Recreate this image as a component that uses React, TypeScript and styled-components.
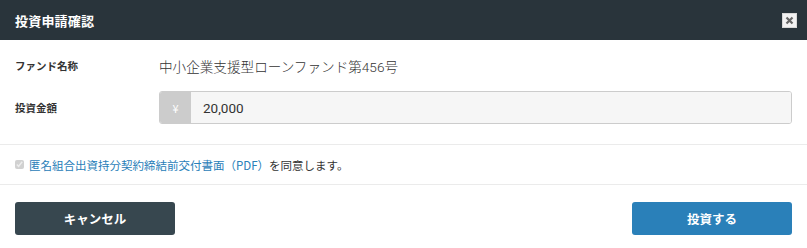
import React from "react";
import styled, { createGlobalStyle } from "styled-components";

const GlobalStyle = createGlobalStyle`
  html, body {
    margin: 0;
    padding: 0;
    background: #ffffff;
  }
  body {
    font-family: "Noto Sans CJK JP", "Noto Sans", sans-serif;
    color: #333333;
  }
`;

const Modal = styled.div`
  width: 807px;
  height: 248px;
  display: flex;
  flex-direction: column;
  background: #ffffff;
`;

const Header = styled.div`
  height: 40px;
  background: #29343b;
  display: flex;
  align-items: center;
  justify-content: space-between;
  padding: 0 10px 0 15px;
  box-sizing: border-box;
`;

const Title = styled.h1`
  margin: 0;
  font-size: 13px;
  font-weight: 700;
  color: #ffffff;
  letter-spacing: 0.2px;
`;

const CloseButton = styled.button`
  width: 15px;
  height: 15px;
  padding: 0;
  border: 1px solid #d8d8d8;
  background: #f2f2f2;
  display: flex;
  align-items: center;
  justify-content: center;
  cursor: pointer;
  margin-top: 1px;
`;

const Body = styled.div`
  padding: 9px 15px 20px;
  display: flex;
  flex-direction: column;
  gap: 9px;
`;

const Row = styled.div`
  display: flex;
  align-items: center;
  min-height: 33px;
`;

const Label = styled.div`
  width: 144px;
  font-size: 10.5px;
  font-weight: 700;
  color: #333333;
`;

const Value = styled.div`
  font-family: Roboto, "Noto Sans CJK JP", sans-serif;
  font-size: 13.6px;
  font-weight: 300;
  color: #333333;
`;

const InputGroup = styled.div`
  flex: 1;
  display: flex;
  height: 33px;
  border: 1px solid #cccccc;
  border-radius: 3px;
  overflow: hidden;
  box-sizing: border-box;
`;

const Addon = styled.div`
  width: 31px;
  background: #cccccc;
  color: #ffffff;
  font-size: 11px;
  display: flex;
  align-items: center;
  justify-content: center;
`;

const AmountInput = styled.input`
  flex: 1;
  border: none;
  outline: none;
  background: #f6f6f6;
  padding: 0 12px;
  font-family: Roboto, "Noto Sans CJK JP", sans-serif;
  font-size: 13.5px;
  color: #333333;
`;

const Agreement = styled.div`
  border-top: 1px solid #ebebeb;
  border-bottom: 1px solid #ebebeb;
  height: 41px;
  box-sizing: border-box;
  display: flex;
  align-items: center;
  padding: 0 15px;
  gap: 5px;
  font-size: 11.5px;
`;

const Check = styled.input`
  margin: 0;
  width: 9px;
  height: 9px;
`;

const DocLink = styled.a`
  color: #2980b9;
  text-decoration: none;
`;

const Footer = styled.div`
  flex: 1;
  display: flex;
  align-items: flex-start;
  justify-content: space-between;
  padding: 17px 15px 0;
`;

const Button = styled.button<{ primary?: boolean }>`
  width: 160px;
  height: 33px;
  border: none;
  border-radius: 3px;
  background: ${(p) => (p.primary ? "#2a80b9" : "#37474f")};
  color: #ffffff;
  font-family: inherit;
  font-size: 12.5px;
  font-weight: 700;
  cursor: pointer;
`;

const App: React.FC = () => {
  return (
    <>
      <GlobalStyle />
      <Modal>
        <Header>
          <Title>投資申請確認</Title>
          <CloseButton aria-label="閉じる">
            <svg width="9" height="9" viewBox="0 0 9 9">
              <path
                d="M1.5 1.5 L7.5 7.5 M7.5 1.5 L1.5 7.5"
                stroke="#666"
                strokeWidth="2.2"
              />
            </svg>
          </CloseButton>
        </Header>
        <Body>
          <Row>
            <Label>ファンド名称</Label>
            <Value>中小企業支援型ローンファンド第456号</Value>
          </Row>
          <Row>
            <Label>投資金額</Label>
            <InputGroup>
              <Addon>¥</Addon>
              <AmountInput defaultValue="20,000" readOnly />
            </InputGroup>
          </Row>
        </Body>
        <Agreement>
          <Check type="checkbox" checked disabled readOnly />
          <span>
            <DocLink href="#">匿名組合出資持分契約締結前交付書面（PDF）</DocLink>
            を同意します。
          </span>
        </Agreement>
        <Footer>
          <Button>キャンセル</Button>
          <Button primary>投資する</Button>
        </Footer>
      </Modal>
    </>
  );
};

export default App;
